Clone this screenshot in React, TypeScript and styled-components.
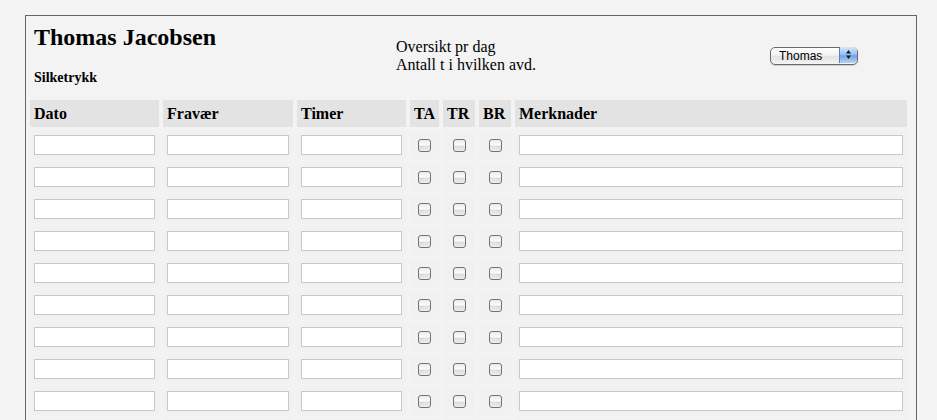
import React from "react";
import styled, { createGlobalStyle } from "styled-components";

const GlobalStyle = createGlobalStyle`
  html, body {
    margin: 0;
    padding: 0;
    background: #f4f4f4;
    font-family: "Liberation Serif", "Times New Roman", serif;
    color: #000;
  }
`;

const Page = styled.div`
  box-sizing: border-box;
  width: 892px;
  margin: 15px 0 0 25px;
  border: 1px solid #666;
  background: #f3f3f3;
  padding-bottom: 20px;
`;

const Header = styled.div`
  display: grid;
  grid-template-columns: 362px 374px auto;
  align-items: center;
  padding: 7px 0 0 8px;
`;

const NameBlock = styled.div`
  display: flex;
  flex-direction: column;
`;

const Title = styled.h1`
  margin: 0 0 19px;
  font-size: 24px;
  line-height: 28px;
  font-weight: bold;
`;

const Dept = styled.h4`
  margin: 0;
  font-size: 14px;
  line-height: 16px;
  font-weight: bold;
`;

const Summary = styled.div`
  padding-top: 2px;
  font-size: 16px;
  line-height: 18px;
`;

const SelectWrap = styled.div`
  position: relative;
  width: 88px;
  height: 18px;
`;

const PersonSelect = styled.select`
  appearance: none;
  -webkit-appearance: none;
  box-sizing: border-box;
  width: 88px;
  height: 18px;
  margin: 0;
  padding: 0 20px 0 8px;
  border: 1px solid #6a6a6a;
  border-radius: 5px;
  background: linear-gradient(#ffffff 0%, #f2f2f2 45%, #e2e2e2 55%, #f4f4f4 100%);
  font-family: "Liberation Sans", Arial, sans-serif;
  font-size: 12px;
  line-height: 16px;
  color: #000;
  box-shadow: 0 1px 1px rgba(0, 0, 0, 0.15);
`;

const ArrowCap = styled.span`
  position: absolute;
  top: 1px;
  right: 1px;
  width: 17px;
  height: 16px;
  border-left: 1px solid #5a7fb8;
  border-radius: 0 4px 4px 0;
  background: linear-gradient(#d6e6fb 0%, #9cc1f0 45%, #6fa2e8 55%, #b6d3f8 100%);
  display: flex;
  align-items: center;
  justify-content: center;
  pointer-events: none;
`;

const Grid = styled.table`
  table-layout: fixed;
  border-collapse: separate;
  border-spacing: 4px;
  margin-top: 10px;
  width: 885px;
`;

const HeadCell = styled.th<{ $w: number }>`
  width: ${(p) => p.$w}px;
  box-sizing: border-box;
  background: #e3e3e3;
  padding: 4px;
  text-align: left;
  font-size: 16px;
  line-height: 19px;
  font-weight: bold;
`;

const Cell = styled.td`
  background: #f1f1f1;
  padding: 4px;
  height: 20px;
  vertical-align: middle;
`;

const TextField = styled.input`
  display: block;
  box-sizing: border-box;
  width: 100%;
  height: 20px;
  margin: 0;
  padding: 0 3px;
  border: 1px solid #c8c8c8;
  background: #fff;
  font-family: "Liberation Sans", Arial, sans-serif;
  font-size: 12px;
  outline: none;
`;

const Check = styled.input`
  appearance: none;
  -webkit-appearance: none;
  display: block;
  box-sizing: border-box;
  width: 13px;
  height: 13px;
  margin: 1px auto 0;
  border: 1px solid #747474;
  border-radius: 3px;
  background: linear-gradient(#e9e9e9 0%, #fbfbfb 40%, #dedede 60%, #eeeeee 100%);
`;

const columns = [
  { label: "Dato", w: 129, kind: "text" },
  { label: "Fravær", w: 130, kind: "text" },
  { label: "Timer", w: 109, kind: "text" },
  { label: "TA", w: 29, kind: "check" },
  { label: "TR", w: 32, kind: "check" },
  { label: "BR", w: 32, kind: "check" },
  { label: "Merknader", w: 392, kind: "text" },
];

const rows = Array.from({ length: 31 }, (_, i) => i);

export default function App() {
  return (
    <>
      <GlobalStyle />
      <Page>
        <Header>
          <NameBlock>
            <Title>Thomas Jacobsen</Title>
            <Dept>Silketrykk</Dept>
          </NameBlock>
          <Summary>
            Oversikt pr dag
            <br />
            Antall t i hvilken avd.
          </Summary>
          <SelectWrap>
            <PersonSelect defaultValue="Thomas">
              <option>Thomas</option>
            </PersonSelect>
            <ArrowCap>
              <svg width="7" height="11" viewBox="0 0 7 11">
                <path d="M3.5 1 L6 4.5 L1 4.5 Z" fill="#1a1a1a" />
                <path d="M3.5 10 L6 6.5 L1 6.5 Z" fill="#1a1a1a" />
              </svg>
            </ArrowCap>
          </SelectWrap>
        </Header>
        <Grid>
          <thead>
            <tr>
              {columns.map((c) => (
                <HeadCell key={c.label} $w={c.w}>
                  {c.label}
                </HeadCell>
              ))}
            </tr>
          </thead>
          <tbody>
            {rows.map((r) => (
              <tr key={r}>
                {columns.map((c) => (
                  <Cell key={c.label}>
                    {c.kind === "text" ? <TextField type="text" /> : <Check type="checkbox" />}
                  </Cell>
                ))}
              </tr>
            ))}
          </tbody>
        </Grid>
      </Page>
    </>
  );
}
